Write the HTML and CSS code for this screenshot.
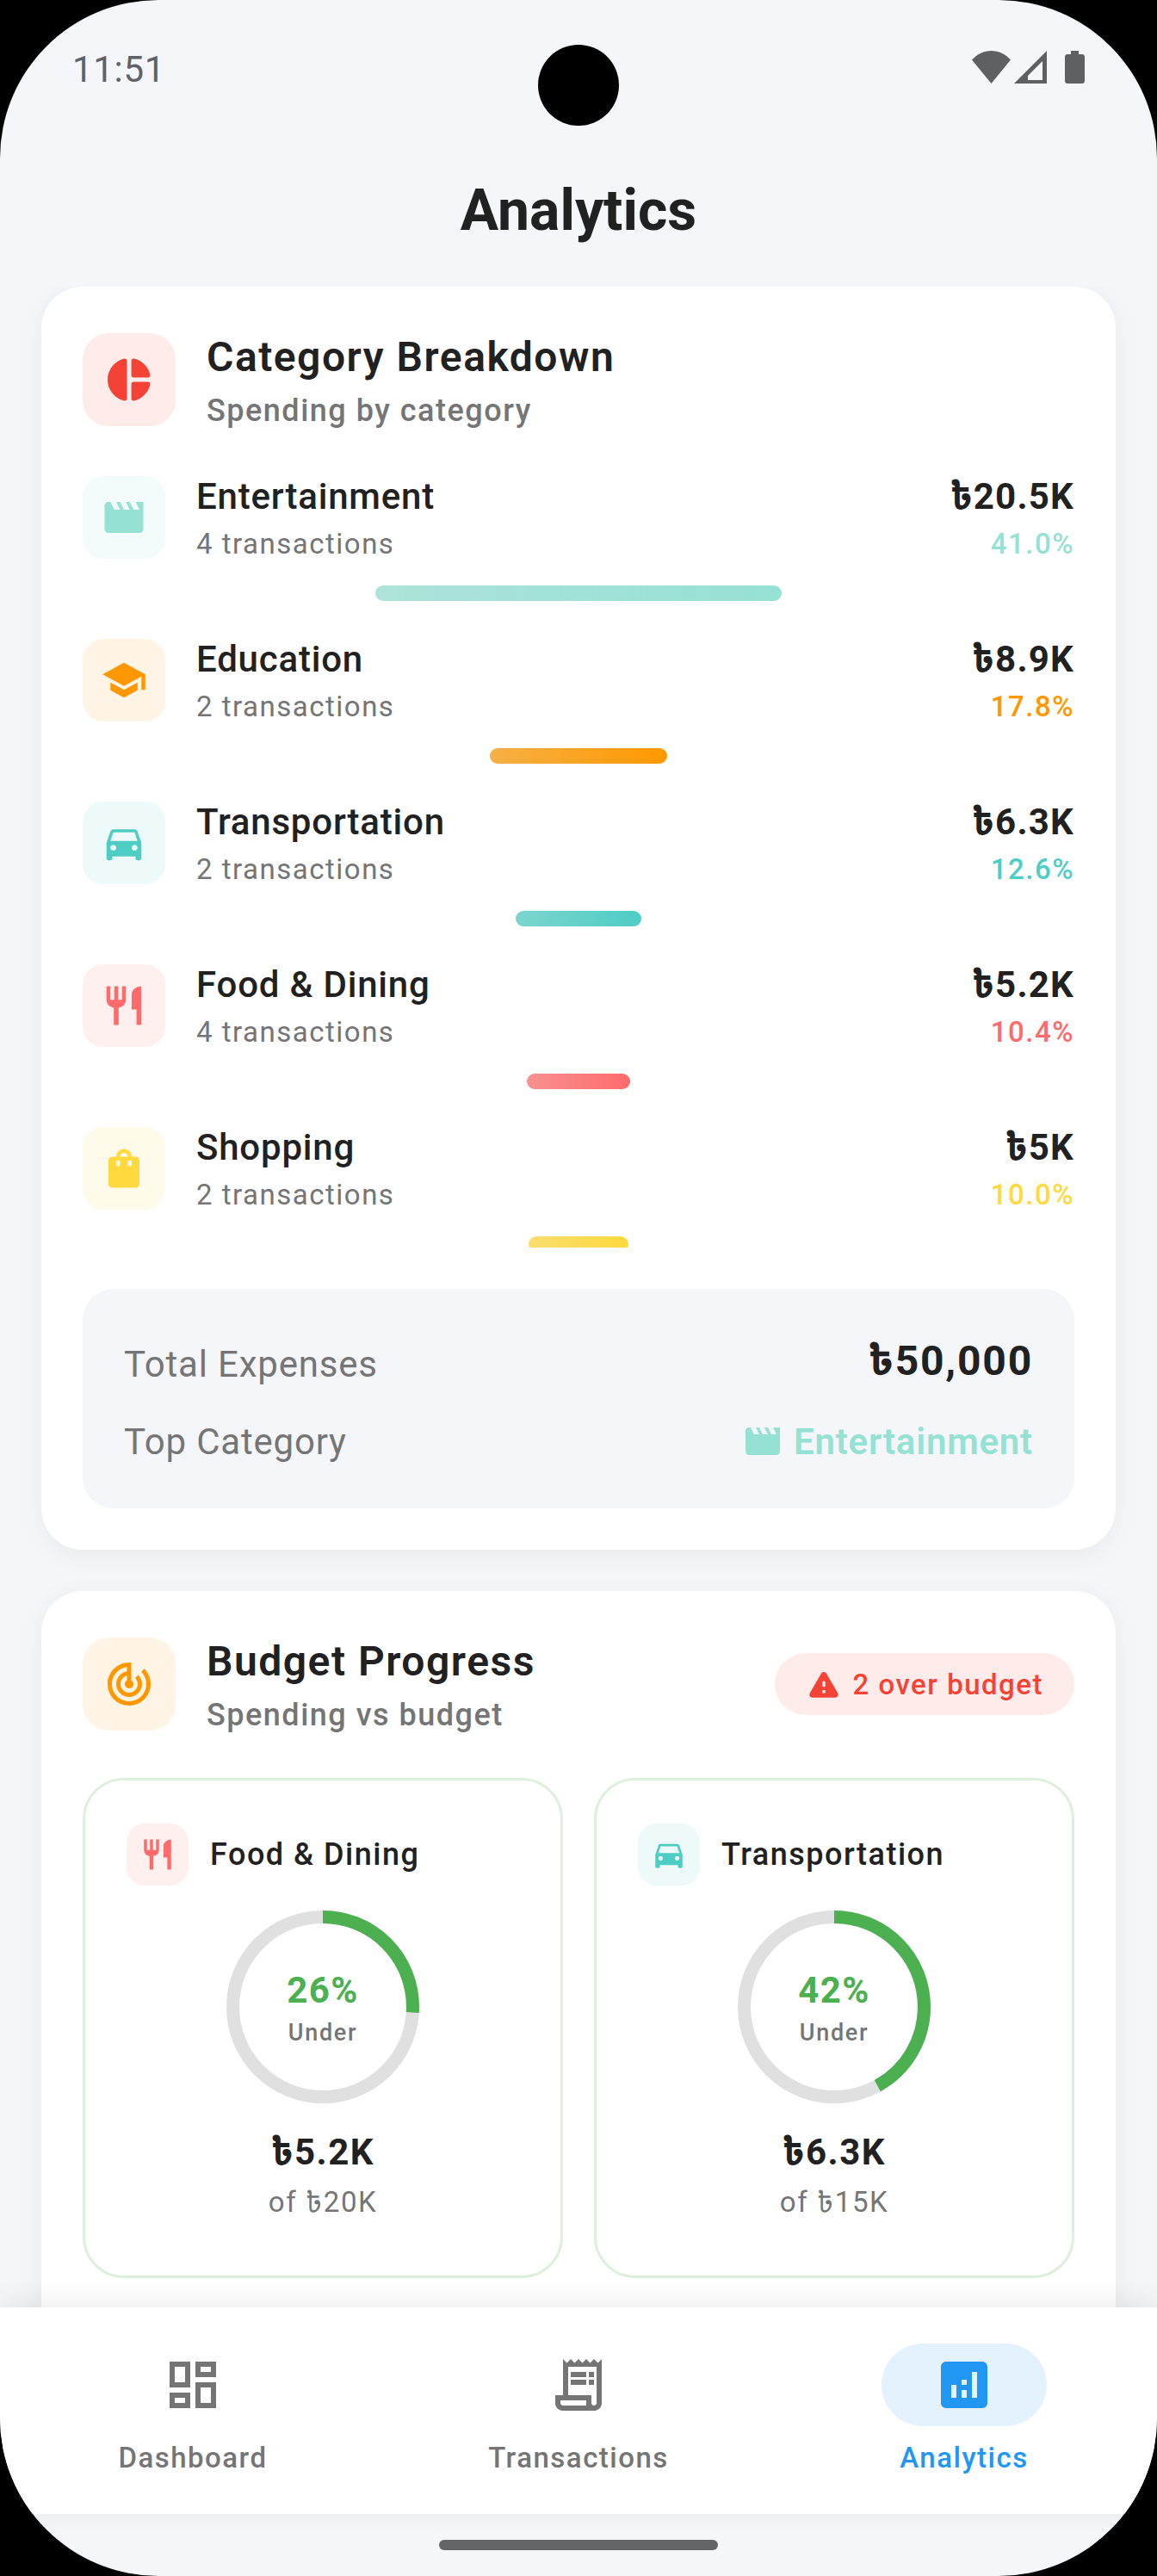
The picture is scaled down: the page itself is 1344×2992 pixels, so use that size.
FILE: index.html
```html
<!DOCTYPE html>
<html lang="en">
<head>
  <meta charset="UTF-8" />
  <meta name="viewport" content="width=device-width, initial-scale=1.0" />
  <title>Analytics</title>
  <link rel="stylesheet" href="styles.css">
</head>
<body>
  <div class="screen">

    <!-- Status bar -->
    <div class="status-bar">
      <span class="status-time">11:51</span>
      <div class="camera"></div>
      <div class="status-icons">
        <svg class="ic-wifi" viewBox="0 0 45 38"><path d="M0 10.5C6 4 14 0 22.500 0S39 4 45 10.500L22.500 38z"/></svg>
        <svg class="ic-signal" viewBox="0 0 38 38"><path fill-rule="evenodd" d="M38 0v38H0zM33 12 16 29v5h17z"/></svg>
        <svg class="ic-battery" viewBox="0 0 23 38"><path d="M7 0h9v4h4c1.700 0 3 1.300 3 3v28c0 1.700-1.300 3-3 3H3c-1.700 0-3-1.300-3-3V7c0-1.700 1.300-3 3-3h4z"/></svg>
      </div>
    </div>

    <h1 class="page-title">Analytics</h1>

    <div class="scroll-area">

      <!-- Category Breakdown -->
      <section class="card">
        <div class="card-header">
          <div class="header-icon bg-red">
            <svg class="ic-60 fill-red" viewBox="0 0 24 24"><path d="M11 3.180v17.640c0 .64-.59 1.120-1.210.98C5.320 20.800 2 16.790 2 12s3.320-8.800 7.790-9.800c.62-.14 1.210.34 1.210.98zm2.030 0v6.810c0 .55.45 1 1 1h6.790c.64 0 1.120-.59.98-1.220-.85-3.760-3.800-6.720-7.550-7.570-.63-.14-1.220.34-1.220.98zm0 10.830v6.810c0 .64.59 1.120 1.220.98 3.760-.85 6.710-3.820 7.560-7.580.14-.62-.35-1.220-.98-1.220h-6.790c-.56.010-1.010.46-1.010 1.010z"/></svg>
          </div>
          <div class="header-text">
            <div class="card-title">Category Breakdown</div>
            <div class="card-sub">Spending by category</div>
          </div>
        </div>

        <div class="category-list">
          <div class="category">
            <div class="category-row">
              <div class="cat-icon bg-mint">
                <svg class="ic-54 fill-mint" viewBox="0 0 24 24"><path d="M18 4l2 4h-3l-2-4h-2l2 4h-3l-2-4H8l2 4H7L5 4H4c-1.100 0-1.990.9-1.990 2L2 18c0 1.100.9 2 2 2h16c1.100 0 2-.9 2-2V4h-4z"/></svg>
              </div>
              <div class="cat-text">
                <div class="cat-name">Entertainment</div>
                <div class="cat-count">4 transactions</div>
              </div>
              <div class="cat-values">
                <div class="cat-amount">৳20.5K</div>
                <div class="cat-pct text-mint">41.0%</div>
              </div>
            </div>
            <div class="bar-track"><div class="bar bar-mint" style="width: 41%"></div></div>
          </div>

          <div class="category">
            <div class="category-row">
              <div class="cat-icon bg-orange">
                <svg class="ic-54 fill-orange" viewBox="0 0 24 24"><path d="M5 13.180v4L12 21l7-3.820v-4L12 17l-7-3.820zM12 3L1 9l11 6 9-4.910V17h2V9L12 3z"/></svg>
              </div>
              <div class="cat-text">
                <div class="cat-name">Education</div>
                <div class="cat-count">2 transactions</div>
              </div>
              <div class="cat-values">
                <div class="cat-amount">৳8.9K</div>
                <div class="cat-pct text-orange">17.8%</div>
              </div>
            </div>
            <div class="bar-track"><div class="bar bar-orange" style="width: 17.8%"></div></div>
          </div>

          <div class="category">
            <div class="category-row">
              <div class="cat-icon bg-teal">
                <svg class="ic-54 fill-teal" viewBox="0 0 24 24"><path d="M18.920 6.010C18.720 5.420 18.160 5 17.500 5h-11c-.66 0-1.210.42-1.420 1.010L3 12v8c0 .55.45 1 1 1h1c.55 0 1-.45 1-1v-1h12v1c0 .55.45 1 1 1h1c.55 0 1-.45 1-1v-8l-2.080-5.990zM6.500 16c-.83 0-1.500-.67-1.500-1.500S5.670 13 6.500 13s1.500.67 1.500 1.500S7.330 16 6.500 16zm11 0c-.83 0-1.500-.67-1.500-1.500s.67-1.500 1.500-1.500 1.500.67 1.500 1.500-.67 1.500-1.500 1.500zM5 11l1.500-4.500h11L19 11H5z"/></svg>
              </div>
              <div class="cat-text">
                <div class="cat-name">Transportation</div>
                <div class="cat-count">2 transactions</div>
              </div>
              <div class="cat-values">
                <div class="cat-amount">৳6.3K</div>
                <div class="cat-pct text-teal">12.6%</div>
              </div>
            </div>
            <div class="bar-track"><div class="bar bar-teal" style="width: 12.6%"></div></div>
          </div>

          <div class="category">
            <div class="category-row">
              <div class="cat-icon bg-coral">
                <svg class="ic-54 fill-coral" viewBox="0 0 24 24"><path d="M11 9H9V2H7v7H5V2H3v7c0 2.120 1.660 3.840 3.750 3.970V22h2.500v-9.030C11.340 12.840 13 11.120 13 9V2h-2v7zm5-3v8h2.500v8H21V2c-2.760 0-5 2.240-5 4z"/></svg>
              </div>
              <div class="cat-text">
                <div class="cat-name">Food &amp; Dining</div>
                <div class="cat-count">4 transactions</div>
              </div>
              <div class="cat-values">
                <div class="cat-amount">৳5.2K</div>
                <div class="cat-pct text-coral">10.4%</div>
              </div>
            </div>
            <div class="bar-track"><div class="bar bar-coral" style="width: 10.4%"></div></div>
          </div>

          <div class="category">
            <div class="category-row">
              <div class="cat-icon bg-yellow">
                <svg class="ic-54 fill-yellow" viewBox="0 0 24 24"><path d="M18 6h-2c0-2.210-1.790-4-4-4S8 3.790 8 6H6c-1.100 0-2 .9-2 2v12c0 1.100.9 2 2 2h12c1.100 0 2-.9 2-2V8c0-1.100-.9-2-2-2zm-8 4c0 .55-.45 1-1 1s-1-.45-1-1V8h2v2zm2-6c1.100 0 2 .9 2 2h-4c0-1.100.9-2 2-2zm4 6c0 .55-.45 1-1 1s-1-.45-1-1V8h2v2z"/></svg>
              </div>
              <div class="cat-text">
                <div class="cat-name">Shopping</div>
                <div class="cat-count">2 transactions</div>
              </div>
              <div class="cat-values">
                <div class="cat-amount">৳5K</div>
                <div class="cat-pct text-yellow">10.0%</div>
              </div>
            </div>
            <div class="bar-track"><div class="bar bar-yellow" style="width: 10%"></div></div>
          </div>
        </div>

        <div class="summary">
          <div class="summary-row">
            <span class="summary-label">Total Expenses</span>
            <span class="summary-total">৳50,000</span>
          </div>
          <div class="summary-row">
            <span class="summary-label">Top Category</span>
            <span class="summary-top">
              <svg class="ic-48 fill-mint" viewBox="0 0 24 24"><path d="M18 4l2 4h-3l-2-4h-2l2 4h-3l-2-4H8l2 4H7L5 4H4c-1.100 0-1.990.9-1.990 2L2 18c0 1.100.9 2 2 2h16c1.100 0 2-.9 2-2V4h-4z"/></svg>
              Entertainment
            </span>
          </div>
        </div>
      </section>

      <!-- Budget Progress -->
      <section class="card card-budget">
        <div class="card-header">
          <div class="header-icon bg-orange">
            <svg class="ic-60 fill-orange" viewBox="0 0 24 24"><path d="M19.070 4.930l-1.410 1.410C19.100 7.790 20 9.790 20 12c0 4.420-3.580 8-8 8s-8-3.580-8-8c0-4.080 3.050-7.440 7-7.930v2.020C8.160 6.570 6 9.030 6 12c0 3.310 2.690 6 6 6s6-2.690 6-6c0-1.660-.67-3.160-1.760-4.240l-1.410 1.410C15.550 9.900 16 10.900 16 12c0 2.210-1.790 4-4 4s-4-1.790-4-4c0-1.860 1.280-3.410 3-3.860v2.140c-.6.35-1 .98-1 1.720 0 1.100.9 2 2 2s2-.9 2-2c0-.74-.4-1.380-1-1.720V2h-1C6.480 2 2 6.480 2 12s4.480 10 10 10 10-4.480 10-10c0-2.760-1.120-5.260-2.930-7.070z"/></svg>
          </div>
          <div class="header-text">
            <div class="card-title">Budget Progress</div>
            <div class="card-sub">Spending vs budget</div>
          </div>
          <div class="over-badge">
            <svg class="ic-42 fill-red" viewBox="0 0 24 24"><path d="M4.470 21h15.060c1.540 0 2.500-1.670 1.730-3L13.730 4.990c-.77-1.330-2.690-1.330-3.460 0L2.740 18c-.77 1.330.19 3 1.730 3zM12 14c-.55 0-1-.45-1-1v-2c0-.55.45-1 1-1s1 .45 1 1v2c0 .55-.45 1-1 1zm1 4h-2v-2h2v2z"/></svg>
            2 over budget
          </div>
        </div>

        <div class="budget-grid">
          <div class="budget-tile">
            <div class="tile-head">
              <div class="tile-icon bg-coral">
                <svg class="ic-42 fill-coral" viewBox="0 0 24 24"><path d="M11 9H9V2H7v7H5V2H3v7c0 2.120 1.660 3.840 3.750 3.970V22h2.500v-9.030C11.340 12.840 13 11.120 13 9V2h-2v7zm5-3v8h2.500v8H21V2c-2.760 0-5 2.240-5 4z"/></svg>
              </div>
              <span class="tile-name">Food &amp; Dining</span>
            </div>
            <div class="ring">
              <svg class="ring-svg" viewBox="0 0 224 224">
                <circle class="ring-track" cx="112" cy="112" r="104.500"/>
                <circle class="ring-value" cx="112" cy="112" r="104.500" pathLength="100" stroke-dasharray="26 100" transform="rotate(-90 112 112)"/>
              </svg>
              <div class="ring-label">
                <div class="ring-pct">26%</div>
                <div class="ring-state">Under</div>
              </div>
            </div>
            <div class="tile-spent">৳5.2K</div>
            <div class="tile-of">of ৳20K</div>
          </div>

          <div class="budget-tile">
            <div class="tile-head">
              <div class="tile-icon bg-teal">
                <svg class="ic-42 fill-teal" viewBox="0 0 24 24"><path d="M18.920 6.010C18.720 5.420 18.160 5 17.500 5h-11c-.66 0-1.210.42-1.420 1.010L3 12v8c0 .55.45 1 1 1h1c.55 0 1-.45 1-1v-1h12v1c0 .55.45 1 1 1h1c.55 0 1-.45 1-1v-8l-2.080-5.990zM6.500 16c-.83 0-1.500-.67-1.500-1.500S5.670 13 6.500 13s1.500.67 1.500 1.500S7.330 16 6.500 16zm11 0c-.83 0-1.500-.67-1.500-1.500s.67-1.500 1.500-1.500 1.500.67 1.500 1.500-.67 1.500-1.500 1.500zM5 11l1.500-4.500h11L19 11H5z"/></svg>
              </div>
              <span class="tile-name">Transportation</span>
            </div>
            <div class="ring">
              <svg class="ring-svg" viewBox="0 0 224 224">
                <circle class="ring-track" cx="112" cy="112" r="104.500"/>
                <circle class="ring-value" cx="112" cy="112" r="104.500" pathLength="100" stroke-dasharray="42 100" transform="rotate(-90 112 112)"/>
              </svg>
              <div class="ring-label">
                <div class="ring-pct">42%</div>
                <div class="ring-state">Under</div>
              </div>
            </div>
            <div class="tile-spent">৳6.3K</div>
            <div class="tile-of">of ৳15K</div>
          </div>
        </div>
      </section>
    </div>

    <!-- Bottom nav -->
    <nav class="bottom-nav">
      <div class="nav-item">
        <div class="nav-icon">
          <svg class="ic-72 fill-grey" viewBox="0 0 24 24"><path d="M19 5v2h-4V5h4M9 5v6H5V5h4m10 8v6h-4v-6h4M9 17v2H5v-2h4M21 3h-8v6h8V3zM11 3H3v10h8V3zm10 8h-8v10h8V11zm-10 4H3v6h8v-6z"/></svg>
        </div>
        <span class="nav-label">Dashboard</span>
      </div>
      <div class="nav-item">
        <div class="nav-icon">
          <svg class="ic-72 fill-grey" viewBox="0 0 24 24"><path d="M19.500 3.500L18 2l-1.500 1.500L15 2l-1.500 1.500L12 2l-1.500 1.500L9 2 7.500 3.500 6 2v14H3v3c0 1.660 1.340 3 3 3h12c1.660 0 3-1.340 3-3V2l-1.500 1.500zM15 20H6c-.55 0-1-.45-1-1v-1h10v2zm4-1c0 .55-.45 1-1 1s-1-.45-1-1v-3H8V5h11v14z"/><path d="M9 7h6v2H9zM16 7h2v2h-2zM9 10h6v2H9zM16 10h2v2h-2z"/></svg>
        </div>
        <span class="nav-label">Transactions</span>
      </div>
      <div class="nav-item active">
        <div class="nav-icon">
          <svg class="ic-72 fill-blue" viewBox="0 0 24 24"><path d="M19 3H5c-1.100 0-2 .9-2 2v14c0 1.100.9 2 2 2h14c1.100 0 2-.9 2-2V5c0-1.100-.9-2-2-2zM9 17H7v-5h2v5zm4 0h-2v-3h2v3zm0-5h-2v-2h2v2zm4 5h-2V7h2v10z"/></svg>
        </div>
        <span class="nav-label">Analytics</span>
      </div>
    </nav>

    <div class="gesture-bar"><div class="gesture-pill"></div></div>
  </div>
</body>
</html>
```

FILE: styles.css
```css
* { margin: 0; padding: 0; box-sizing: border-box; }
html, body {
  width: 1344px;
  height: 2992px;
  overflow: hidden;
  background: black;
  font-family: Roboto, "Noto Sans Bengali", "Noto Sans", sans-serif;
}

.screen {
  position: relative;
  display: flex;
  flex-direction: column;
  width: 1344px;
  height: 2992px;
  overflow: hidden;
  background: #f5f6fa;
  border-radius: 184px;
}

/* status bar */
.status-bar {
  display: flex;
  justify-content: space-between;
  align-items: center;
  height: 156px;
  padding: 0 84px;
  color: #5f6368;
}
.status-time { font-size: 42px; letter-spacing: 0.7px; margin-top: 4px; }
.camera {
  position: absolute;
  top: 52px;
  left: 625px;
  width: 94px;
  height: 94px;
  border-radius: 50%;
  background: black;
}
.status-icons { display: flex; align-items: center; }
.status-icons svg { display: block; height: 38px; fill: #5f6063; }
.ic-wifi { width: 45px; }
.ic-signal { width: 38px; margin-left: 4px; }
.ic-battery { width: 23px; margin-left: 21px; }

.page-title {
  height: 177px;
  padding-top: 50px;
  text-align: center;
  font-size: 66px;
  font-weight: 700;
  line-height: 78px;
  color: #212121;
}

.scroll-area {
  flex: 1;
  min-height: 0;
  overflow: hidden;
  padding: 0 48px;
}

/* cards */
.card {
  padding: 54px 48px 48px;
  margin-bottom: 48px;
  background: white;
  border-radius: 48px;
  box-shadow: 0 6px 30px rgba(0, 0, 0, 0.05);
}
.card-budget { padding-bottom: 120px; }
.card-header { display: flex; align-items: center; height: 108px; }
.header-icon {
  display: flex;
  justify-content: center;
  align-items: center;
  flex-shrink: 0;
  width: 108px;
  height: 108px;
  border-radius: 30px;
}
.header-text { flex: 1; margin-left: 36px; }
.card-title {
  font-size: 48px;
  font-weight: 600;
  line-height: 56px;
  letter-spacing: 1.5px;
  color: #212121;
}
.card-sub {
  margin-top: 16px;
  font-size: 36px;
  font-weight: 500;
  line-height: 36px;
  letter-spacing: 1.5px;
  color: #757575;
}

svg { display: block; }
.ic-60 { width: 60px; height: 60px; }
.ic-54 { width: 54px; height: 54px; }
.ic-48 { width: 48px; height: 48px; }
.ic-42 { width: 42px; height: 42px; }
.ic-72 { width: 72px; height: 72px; }

.bg-red { background: rgba(244, 67, 54, 0.1); }
.bg-mint { background: rgba(149, 225, 211, 0.1); }
.bg-orange { background: rgba(255, 152, 0, 0.1); }
.bg-teal { background: rgba(78, 205, 196, 0.1); }
.bg-coral { background: rgba(255, 107, 107, 0.1); }
.bg-yellow { background: rgba(255, 217, 61, 0.1); }

.fill-red { fill: #f44336; }
.fill-mint { fill: #95e1d3; }
.fill-orange { fill: #ff9800; }
.fill-teal { fill: #4ecdc4; }
.fill-coral { fill: #ff6b6b; }
.fill-yellow { fill: #ffd93d; }
.fill-grey { fill: #757575; }
.fill-blue { fill: #2196f3; }

.text-mint { color: #95e1d3; }
.text-orange { color: #ff9800; }
.text-teal { color: #4ecdc4; }
.text-coral { color: #ff6b6b; }
.text-yellow { color: #ffd93d; }

/* category list */
.category-list {
  height: 896px;
  margin-top: 58px;
  overflow: hidden;
}
.category { height: 189px; }
.category-row { display: flex; align-items: flex-start; height: 96px; }
.cat-icon {
  display: flex;
  justify-content: center;
  align-items: center;
  flex-shrink: 0;
  width: 96px;
  height: 96px;
  border-radius: 24px;
}
.cat-text { flex: 1; margin-left: 36px; padding-top: 4px; }
.cat-name {
  font-size: 42px;
  font-weight: 500;
  line-height: 40px;
  letter-spacing: 0.8px;
  color: #212121;
}
.cat-count {
  margin-top: 15px;
  font-size: 33px;
  line-height: 40px;
  letter-spacing: 1.5px;
  color: #757575;
}
.cat-values { padding-top: 4px; text-align: right; }
.cat-amount {
  font-size: 42px;
  font-weight: 700;
  line-height: 40px;
  letter-spacing: 1.2px;
  color: #212121;
}
.cat-pct {
  margin-top: 15px;
  font-size: 33px;
  font-weight: 500;
  line-height: 40px;
  letter-spacing: 1.5px;
}
.bar-track { display: flex; justify-content: center; margin-top: 31px; }
.bar { height: 18px; border-radius: 9px; }
.bar-mint { background: linear-gradient(to right, rgba(149, 225, 211, 0.7), #95e1d3), #e8e8e8; }
.bar-orange { background: linear-gradient(to right, rgba(255, 152, 0, 0.7), #ff9800), #e8e8e8; }
.bar-teal { background: linear-gradient(to right, rgba(78, 205, 196, 0.7), #4ecdc4), #e8e8e8; }
.bar-coral { background: linear-gradient(to right, rgba(255, 107, 107, 0.7), #ff6b6b), #e8e8e8; }
.bar-yellow { background: linear-gradient(to right, rgba(255, 217, 61, 0.7), #ffd93d), #e8e8e8; }

/* summary */
.summary {
  display: flex;
  flex-direction: column;
  gap: 24px;
  margin-top: 48px;
  padding: 54px 48px 45px;
  background: #f5f6fa;
  border-radius: 36px;
}
.summary-row {
  display: flex;
  justify-content: space-between;
  align-items: center;
  height: 66px;
}
.summary-label { font-size: 42px; letter-spacing: 0.8px; color: #757575; }
.summary-total { font-size: 48px; font-weight: 700; letter-spacing: 1.8px; color: #212121; }
.summary-top {
  display: flex;
  align-items: center;
  gap: 12px;
  font-size: 42px;
  font-weight: 600;
  letter-spacing: 0.8px;
  color: #95e1d3;
}

/* budget */
.over-badge {
  display: flex;
  align-items: center;
  gap: 12px;
  height: 72px;
  padding: 0 36px;
  background: rgba(244, 67, 54, 0.1);
  border-radius: 36px;
  font-size: 33px;
  font-weight: 500;
  letter-spacing: 1.5px;
  color: #f44336;
}
.budget-grid {
  display: grid;
  grid-template-columns: 1fr 1fr;
  gap: 36px;
  margin-top: 55px;
}
.budget-tile {
  display: flex;
  flex-direction: column;
  align-items: center;
  height: 581px;
  padding: 50px 48px 48px;
  border: 3px solid #dcf0dd;
  border-radius: 48px;
}
.tile-head { display: flex; align-items: center; align-self: flex-start; }
.tile-icon {
  display: flex;
  justify-content: center;
  align-items: center;
  width: 72px;
  height: 72px;
  border-radius: 21px;
}
.tile-name {
  margin-left: 25px;
  font-size: 36px;
  font-weight: 500;
  letter-spacing: 1.5px;
  color: #212121;
}
.ring { position: relative; width: 224px; height: 224px; margin-top: 29px; }
.ring-svg { width: 224px; height: 224px; }
.ring-track, .ring-value { fill: none; stroke-width: 15; }
.ring-track { stroke: #e0e0e0; }
.ring-value { stroke: #4caf50; }
.ring-label {
  position: absolute;
  inset: 0;
  display: flex;
  flex-direction: column;
  justify-content: center;
  align-items: center;
  padding-top: 6px;
}
.ring-pct { font-size: 42px; font-weight: 700; line-height: 50px; letter-spacing: 1.5px; color: #4caf50; }
.ring-state { margin-top: 4px; font-size: 27px; font-weight: 500; line-height: 40px; letter-spacing: 1.7px; color: #757575; }
.tile-spent { margin-top: 30px; font-size: 42px; font-weight: 700; line-height: 54px; letter-spacing: 1.5px; color: #212121; }
.tile-of { margin-top: 6px; font-size: 33px; line-height: 50px; letter-spacing: 1.5px; color: #757575; }

/* bottom nav */
.bottom-nav {
  position: relative;
  display: grid;
  grid-template-columns: repeat(3, 1fr);
  flex-shrink: 0;
  height: 240px;
  background: white;
  box-shadow: 0 -6px 30px rgba(0, 0, 0, 0.08);
}
.nav-item {
  display: flex;
  flex-direction: column;
  align-items: center;
  padding-top: 42px;
}
.nav-icon {
  display: flex;
  justify-content: center;
  align-items: center;
  width: 192px;
  height: 96px;
  border-radius: 48px;
}
.nav-label {
  margin-top: 16px;
  font-size: 33px;
  font-weight: 500;
  line-height: 42px;
  letter-spacing: 1.5px;
  color: #757575;
}
.nav-item.active .nav-icon { background: #e3f2fd; }
.nav-item.active .nav-label { color: #2196f3; }

.gesture-bar {
  display: flex;
  justify-content: center;
  flex-shrink: 0;
  height: 72px;
  padding-top: 30px;
}
.gesture-pill { width: 324px; height: 12px; border-radius: 6px; background: #636466; }
```
